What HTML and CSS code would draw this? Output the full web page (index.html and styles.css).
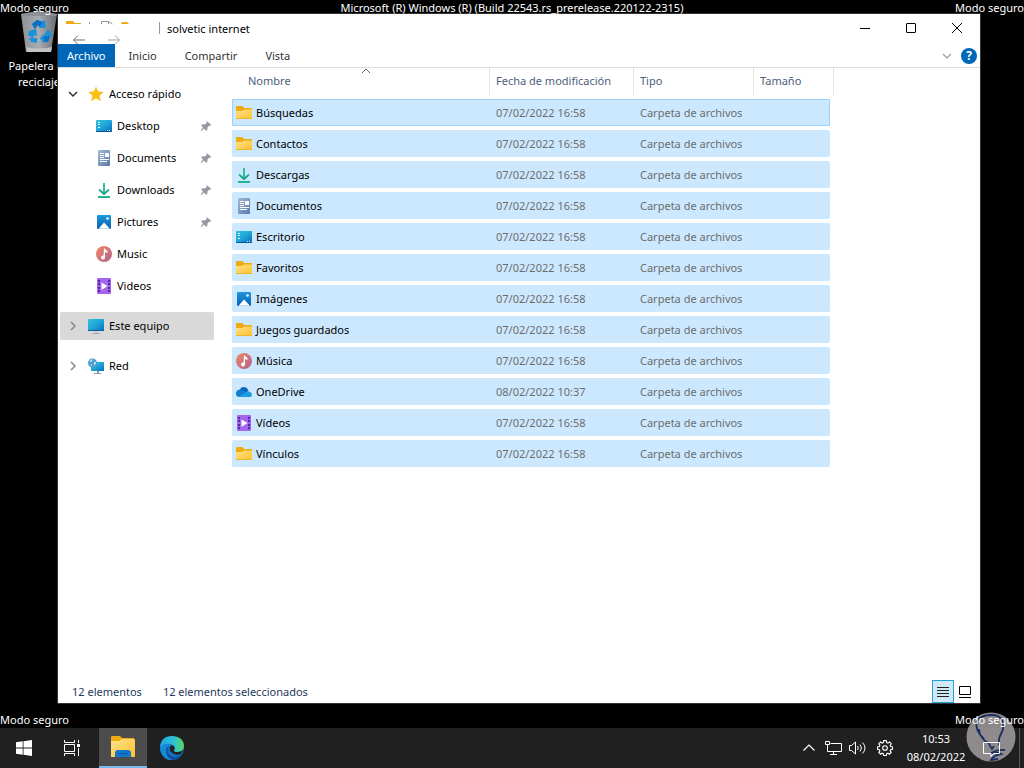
FILE: index.html
```html
<!DOCTYPE html>
<html lang="es">
<head>
<meta charset="utf-8">
<title>solvetic internet</title>
<link rel="stylesheet" href="styles.css">
</head>
<body>
<svg class="defs" width="0" height="0" aria-hidden="true">
  <defs>
    <linearGradient id="gFolder" x1="0" y1="0" x2="1" y2="1"><stop offset="0" stop-color="#ffe08a"/><stop offset="1" stop-color="#fdc32f"/></linearGradient>
    <linearGradient id="gBlue" x1="0" y1="0" x2="1" y2="1"><stop offset="0" stop-color="#2fc4dc"/><stop offset=".5" stop-color="#1fa5d8"/><stop offset="1" stop-color="#0a6cbd"/></linearGradient>
    <linearGradient id="gPic" x1="0" y1="0" x2="0" y2="1"><stop offset="0" stop-color="#1d98dc"/><stop offset="1" stop-color="#0960b4"/></linearGradient>
    <linearGradient id="gDoc" x1="0" y1="0" x2="1" y2="1"><stop offset="0" stop-color="#a3bbd4"/><stop offset="1" stop-color="#5878ac"/></linearGradient>
    <linearGradient id="gDown" x1="0" y1="0" x2="0" y2="1"><stop offset="0" stop-color="#35cf9c"/><stop offset="1" stop-color="#0f9a86"/></linearGradient>
    <linearGradient id="gMusic" x1="0" y1="0" x2="1" y2="1"><stop offset="0" stop-color="#ee8a62"/><stop offset="1" stop-color="#b4608f"/></linearGradient>
    <linearGradient id="gBin" x1="0" y1="0" x2="1" y2="0"><stop offset="0" stop-color="#8d9196"/><stop offset=".5" stop-color="#a9adb1"/><stop offset="1" stop-color="#686c70"/></linearGradient>
    <linearGradient id="gEdge" x1="0" y1="0" x2="1" y2="0"><stop offset="0" stop-color="#1fa4e6"/><stop offset=".6" stop-color="#2fc3d2"/><stop offset="1" stop-color="#5bd65c"/></linearGradient>
  </defs>
  <symbol id="folder" viewBox="0 0 16 16"><path d="M0 2q0-1 1-1h5q.6 0 1 .5L8 3h7q1 0 1 1v4H0z" fill="#eeaa10"/><path d="M0 6h6l2-1.500h7.500q.5 0 .5.500v9H0z" fill="url(#gFolder)"/><path d="M0 13h16v1H0z" fill="#f0b428"/></symbol>
  <symbol id="desktop" viewBox="0 0 16 16"><rect y="2" width="16" height="12" rx="1" fill="url(#gBlue)"/><path d="M0 13h16q0 1-1 1H1q-1 0-1-1z" fill="#07549b"/><path d="M2 4h2v1H2zM2 6h2v1H2zM2 9h2v1H2zM11 12h1v1h-1zM13 12h1v1h-1z" fill="#e9faff"/></symbol>
  <symbol id="document" viewBox="0 0 16 16"><path d="M3 0h10q1 0 1 1v14q0 1-1 1H3q-1 0-1-1V1q0-1 1-1z" fill="url(#gDoc)"/><path d="M4 3h4v1H4zM4 5h4v1H4zM9 3h4v4H9zM4 7h4v1H4zM4 9h9v1H4zM4 11h7v1H4z" fill="#fff"/></symbol>
  <symbol id="download" viewBox="0 0 16 16"><path d="M8 1v10.500M3 7.500l5 4.500 5-4.500" fill="none" stroke="url(#gDown)" stroke-width="1.700"/><path d="M7.200 1h1.600v10H7.200z" fill="#2fbd98"/><path d="M2 14h12v2H2z" fill="#27b38c"/></symbol>
  <symbol id="picture" viewBox="0 0 16 16"><rect x="1" y="1" width="14" height="14" rx="1" fill="url(#gPic)"/><path d="M2.500 14.800L8 8.500l6 6.300z" fill="#fff"/><circle cx="11.500" cy="4.500" r="1.300" fill="#fff"/></symbol>
  <symbol id="music" viewBox="0 0 16 16"><circle cx="8" cy="8" r="8" fill="url(#gMusic)"/><path d="M8 2.500h1q.5 1.500 2.500 2.500v2L9 6v5.500a2 2 0 1 1-1.500-2z" fill="#fff"/></symbol>
  <symbol id="video" viewBox="0 0 16 16"><rect x="1" width="14" height="16" rx="1" fill="#a564f0"/><path d="M2 2h2v2H2zM2 5h2v2H2zM2 9h2v2H2zM2 12h2v2H2zM12 2h2v2h-2zM12 5h2v2h-2zM12 9h2v2h-2zM12 12h2v2h-2z" fill="#56269e"/><path d="M5.500 4.500l6 3.500-6 4z" fill="#fff"/></symbol>
  <symbol id="onedrive" viewBox="0 0 16 16"><path d="M3.500 6q2-4.500 6.500-2.500 1.800 1 2.500 3.500l-5 3z" fill="#0867b8"/><path d="M3 13q-3-.5-3-3.500 0-3.500 4-4Q7 5 12 11z" fill="#127dd1"/><path d="M2.500 12.700L10 8q2-1.700 4 0 2 .5 2 2.500 0 2.500-2.500 2.500H5q-1.500 0-2.500-.3z" fill="#1e9be0"/></symbol>
  <symbol id="pc" viewBox="0 0 16 16"><rect y="1" width="16" height="12" rx=".6" fill="url(#gBlue)"/><path d="M4 15h8v1H4z" fill="#9aa8b0"/><path d="M7 13h2v2H7z" fill="#b6c1c8"/><path d="M0 12h16v1H0z" fill="#0a5e9d"/></symbol>
  <symbol id="network" viewBox="0 0 16 16"><rect x="3" y="4" width="13" height="9" rx=".6" fill="url(#gBlue)"/><path d="M6 15h7v1H6zM9 13h2v2H9z" fill="#8c9ba4"/><circle cx="4.500" cy="5" r="4.500" fill="#4f9fd0"/><path d="M1.500 3q2-2 3.500-1.500L4 3 2.500 4zM6 4l2 0-.5 2.500L6 7zM2 6l2 1v1.500z" fill="#cde6f2"/></symbol>
  <symbol id="pin" viewBox="0 0 16 16"><path d="M9 2.500l5 4-1 1.200-1.200-.2-2.300 2.200.1 2.800-1.300 1-2.600-2.600L2.500 14 2 13.500l2.500-3.800L2.600 7.200l1-1.100 3 .2L9 4.500l-.8-1z" fill="#92989f"/></symbol>
</svg>

<main class="desktop">
  <button class="recycle">
    <svg viewBox="0 0 42 42" class="recycle-icon">
      <path d="M3 3L21 0l18 3-6 38H8z" fill="url(#gBin)"/>
      <path d="M3 3L21 0l18 3-1 2H4z" fill="#8b8f95"/>
      <path d="M8 36q12 3 26 0l-1 5H9z" fill="#c2c2c2"/>
      <path d="M14 13l5-4 6 2 1 5-4 1-2-3-3 4z" fill="#086bc0"/>
      <path d="M25 10l2-1 1 8-7-1 2-2zM11 20l7-2 1 7-3-1-1 3-5-3zM11 27h8v5l-6-1zM30 18l4 6-3 3-5-3zM22 27l4-4v2h6l-2 6h-4v2z" fill="#1692dd"/>
      <path d="M14 13l5-4 6 2-5 2-3 5zM26 25h6l-2 6h-4z" fill="#0b73c8"/>
    </svg>
    <span>Papelera de<br>reciclaje</span>
  </button>
  <span class="safe top left">Modo seguro</span>
  <span class="safe top center">Microsoft (R) Windows (R) (Build 22543.rs_prerelease.220122-2315)</span>
  <span class="safe top right">Modo seguro</span>
  <span class="safe bottom left">Modo seguro</span>
  <span class="safe bottom right">Modo seguro</span>

  <section class="window">
    <header class="titlebar">
      <svg class="quick" width="102" height="30" viewBox="0 0 102 30" fill="none">
        <path d="M8 10V8q0-1 1-1h6l2 2h6v1z" fill="#eeaa10"/>
        <path d="M31.500 8v2M101.500 8v12" stroke="#999"/>
        <path d="M43.500 10V7.500h7l4 2.500M50.500 7.500V10" stroke="#92989d"/>
        <path d="M63 10q0-2 2-2h4l2 2z" fill="#eeaa10"/>
        <path d="M15.500 26h11.500M20 21.500L15.500 26l4.500 4.500" stroke="#6e6e6e"/>
        <path d="M50 26h11.500M57 21.500l4.500 4.500-4.500 4.500" stroke="#a3a3a3"/>
      </svg>
      <h1 class="title">solvetic internet</h1>
      <div class="controls">
        <button aria-label="Minimizar"><svg width="12" height="12"><path d="M1 6.500h10" stroke="#000"/></svg></button>
        <button aria-label="Maximizar"><svg width="12" height="12"><rect x="1.500" y="1.500" width="9" height="9" rx=".5" fill="none" stroke="#000"/></svg></button>
        <button aria-label="Cerrar"><svg width="12" height="12"><path d="M1 1l10 10M11 1L1 11" stroke="#000"/></svg></button>
      </div>
    </header>
    <nav class="tabs">
      <button class="tab active">Archivo</button>
      <button class="tab">Inicio</button>
      <button class="tab">Compartir</button>
      <button class="tab">Vista</button>
      <div class="tab-tools">
        <button aria-label="Expandir la cinta"><svg width="10" height="8"><path d="M1 2l4 4 4-4" fill="none" stroke="#999" stroke-width="1.200"/></svg></button>
        <button class="help" aria-label="Ayuda">?</button>
      </div>
    </nav>
    <div class="content">
      <nav class="sidebar">
        <a class="node" href="#"><svg class="chev" viewBox="0 0 10 10"><path d="M1 3l4 4 4-4" fill="none" stroke="#333" stroke-width="1.500"/></svg><svg class="icon" viewBox="0 0 16 16"><path d="M8 .5l2.200 5.100 5.500.5-4.200 3.600 1.300 5.500L8 12.300l-4.800 2.900 1.300-5.500L.3 6.100l5.500-.5z" fill="#fbbe16"/></svg>Acceso rápido</a>
        <a class="node sub" href="#"><svg class="icon"><use href="#desktop"/></svg>Desktop<svg class="pin"><use href="#pin"/></svg></a>
        <a class="node sub" href="#"><svg class="icon"><use href="#document"/></svg>Documents<svg class="pin"><use href="#pin"/></svg></a>
        <a class="node sub" href="#"><svg class="icon"><use href="#download"/></svg>Downloads<svg class="pin"><use href="#pin"/></svg></a>
        <a class="node sub" href="#"><svg class="icon"><use href="#picture"/></svg>Pictures<svg class="pin"><use href="#pin"/></svg></a>
        <a class="node sub" href="#"><svg class="icon"><use href="#music"/></svg>Music</a>
        <a class="node sub" href="#"><svg class="icon"><use href="#video"/></svg>Videos</a>
        <a class="node root current" href="#"><svg class="chev" viewBox="0 0 10 10"><path d="M3 1l4 4-4 4" fill="none" stroke="#888" stroke-width="1.500"/></svg><svg class="icon"><use href="#pc"/></svg>Este equipo</a>
        <a class="node root" href="#"><svg class="chev" viewBox="0 0 10 10"><path d="M3 1l4 4-4 4" fill="none" stroke="#888" stroke-width="1.500"/></svg><svg class="icon"><use href="#network"/></svg>Red</a>
      </nav>
      <div class="files">
        <table>
          <colgroup><col class="c-name"><col class="c-date"><col class="c-type"><col class="c-size"></colgroup>
          <thead><tr><th>Nombre<svg class="sort" width="10" height="6"><path d="M1 5l4-4 4 4" fill="none" stroke="#666"/></svg></th><th>Fecha de modificación</th><th>Tipo</th><th>Tamaño</th></tr></thead>
          <tbody>
            <tr class="focused"><td><svg class="icon"><use href="#folder"/></svg>Búsquedas</td><td>07/02/2022 16:58</td><td>Carpeta de archivos</td><td></td></tr>
            <tr><td><svg class="icon"><use href="#folder"/></svg>Contactos</td><td>07/02/2022 16:58</td><td>Carpeta de archivos</td><td></td></tr>
            <tr><td><svg class="icon"><use href="#download"/></svg>Descargas</td><td>07/02/2022 16:58</td><td>Carpeta de archivos</td><td></td></tr>
            <tr><td><svg class="icon"><use href="#document"/></svg>Documentos</td><td>07/02/2022 16:58</td><td>Carpeta de archivos</td><td></td></tr>
            <tr><td><svg class="icon"><use href="#desktop"/></svg>Escritorio</td><td>07/02/2022 16:58</td><td>Carpeta de archivos</td><td></td></tr>
            <tr><td><svg class="icon"><use href="#folder"/></svg>Favoritos</td><td>07/02/2022 16:58</td><td>Carpeta de archivos</td><td></td></tr>
            <tr><td><svg class="icon"><use href="#picture"/></svg>Imágenes</td><td>07/02/2022 16:58</td><td>Carpeta de archivos</td><td></td></tr>
            <tr><td><svg class="icon"><use href="#folder"/></svg>Juegos guardados</td><td>07/02/2022 16:58</td><td>Carpeta de archivos</td><td></td></tr>
            <tr><td><svg class="icon"><use href="#music"/></svg>Música</td><td>07/02/2022 16:58</td><td>Carpeta de archivos</td><td></td></tr>
            <tr><td><svg class="icon"><use href="#onedrive"/></svg>OneDrive</td><td>08/02/2022 10:37</td><td>Carpeta de archivos</td><td></td></tr>
            <tr><td><svg class="icon"><use href="#video"/></svg>Vídeos</td><td>07/02/2022 16:58</td><td>Carpeta de archivos</td><td></td></tr>
            <tr><td><svg class="icon"><use href="#folder"/></svg>Vínculos</td><td>07/02/2022 16:58</td><td>Carpeta de archivos</td><td></td></tr>
          </tbody>
        </table>
      </div>
    </div>
    <footer class="status">
      <span>12 elementos</span>
      <span>12 elementos seleccionados</span>
      <div class="views">
        <button class="view on" aria-label="Detalles"><svg width="12" height="12"><path d="M0 1.500h12M0 4.500h12M0 7.500h12M0 10.500h12" stroke="#222"/></svg></button>
        <button class="view" aria-label="Iconos grandes"><svg width="12" height="12"><path d="M.5.500h11v8H.5zM0 11.500h12" fill="none" stroke="#000"/></svg></button>
      </div>
    </footer>
  </section>
</main>

<footer class="taskbar">
  <button class="task" aria-label="Inicio"><svg width="16" height="16" fill="#fff"><path d="M0 2.300L6.700 1.300v6.200H0zM7.500 1.200L16 0v7.500H7.500zM0 8.500h6.700v6.200L0 13.700zM7.500 8.500H16V16l-8.500-1.200z"/></svg></button>
  <button class="task" aria-label="Vista de tareas"><svg width="16" height="16" fill="none" stroke="#fff"><path d="M.5 0v2.500h10V0M.5 16v-2.500h10V16M.5 4.500h10v7H.5zM14.500 0v3M14.500 8v8"/><path d="M13 4h3v3h-3z" fill="#fff" stroke="none"/></svg></button>
  <button class="task running" aria-label="Explorador de archivos"><svg width="24" height="24" viewBox="0 0 24 24"><path d="M0 2q0-1 1-1h8l2 2h12v5H0z" fill="#eeaa10"/><path d="M0 6h8l3-2h12q1 0 1 1v17H0z" fill="url(#gFolder)"/><path d="M4 22v-4q0-3 3-3h10q3 0 3 3v4z" fill="#1375cb"/><path d="M7 18h10v1H7z" fill="#0b5aa5"/></svg></button>
  <button class="task" aria-label="Microsoft Edge"><svg width="24" height="24" viewBox="0 0 24 24"><circle cx="12" cy="12" r="12" fill="#1172c4"/><path d="M0 11Q1 0 12.500 0 24 1 24 10q-.5 6-6.500 6-4 0-3.500-2 2-2 0-4Q8 5 0 11z" fill="url(#gEdge)"/><path d="M0 11Q6 6 12 9q-5 0-5 6 1 7 8 8.500Q4 26 .5 15z" fill="#168bd8"/><path d="M9 10q-4 6 2 10 5 3 11.500-2Q19 24 13 24 6 22 6 15q0-4 3-5z" fill="#0e4d96"/><path d="M12 9q-4 3-1 7 4 4 10 2l3-5q-2 3-7 3-4 0-3-2 2-3-2-5z" fill="#222"/></svg></button>
  <div class="tray">
    <button aria-label="Iconos ocultos"><svg width="12" height="8"><path d="M.5 6.500L6 1l5.500 5.500" fill="none" stroke="#fff" stroke-width="1.200"/></svg></button>
    <button aria-label="Red"><svg width="17" height="14" fill="none" stroke="#fff"><path d="M5.500 2.500h11v8H2.500V5M5 13.500h7M8.500 10.500v3M.5.500h4v3h-4zM2.500 4v2"/></svg></button>
    <button aria-label="Volumen"><svg width="17" height="14" fill="none" stroke="#fff"><path d="M.5 4.500h2L6.500 1v12L2.500 9.500h-2zM8.500 5q1.500 2 0 4M11 3.500q3 3.500 0 7M13.500 1.500q5 5.500 0 11"/></svg></button>
    <button aria-label="Configuración"><svg width="16" height="16" viewBox="0 0 16 16" fill="none" stroke="#fff" stroke-width="1.100"><path d="M6.700.6h2.600l.4 2 1.200.5L12.600 2l1.700 1.700-1.100 1.700.5 1.200 1.800.3v2.400l-1.900.4-.5 1.200 1.100 1.600-1.700 1.700-1.600-1-1.200.5-.4 1.800H6.700l-.4-1.800-1.200-.5-1.600 1-1.700-1.700 1.100-1.600-.5-1.200-1.900-.4V6.900l1.900-.3.500-1.200-1.100-1.700L3.500 2l1.600 1.100 1.200-.5z"/><circle cx="8" cy="8" r="2.300"/></svg></button>
    <time class="clock" datetime="2022-02-08T10:53">10:53<br>08/02/2022</time>
    <button class="notify" aria-label="Notificaciones"><svg width="17" height="16" fill="none" stroke="#fff"><path d="M.5 1.500h16v11h-6l-2.500 3v-3H.5z"/></svg></button>
  </div>
</footer>
<svg class="watermark" width="50" height="50" viewBox="0 0 50 50">
  <circle cx="25" cy="25" r="24.500" fill="#9b9799" fill-opacity=".9"/>
  <path d="M18 27Q8 17 11 9q4-6 14-6 9 0 11 5 3 7-1 14-3 5-2 11M13 17q0 6 6 12 4 1 5 5l2 3 2-3M39 38q-7-1-14 3 6-1 10 1-7 1-10 6l7-1" fill="none" stroke="#1b2f63" stroke-width="1.800"/>
</svg>
</body>
</html>
```

FILE: styles.css
```css
* { box-sizing: border-box; }

body {
  margin: 0;
  height: 100vh;
  display: grid;
  grid-template-rows: 1fr 40px;
  background: #000;
  color: #000;
  font: 11px/16px "Segoe UI", "Noto Sans", "Open Sans", sans-serif;
  overflow: hidden;
}

button {
  border: 0;
  padding: 0;
  background: none;
  color: inherit;
  font: inherit;
}

svg { display: block; flex: none; }
.defs { position: absolute; }
.icon { width: 16px; height: 16px; }

.desktop { position: relative; }

.safe {
  position: absolute;
  z-index: 1;
  color: #fff;
  white-space: nowrap;
}
.top { top: 0; }
.bottom { bottom: 0; }
.left { left: 0; }
.right { right: 0; }
.center { left: 0; right: 0; text-align: center; }

.recycle {
  position: absolute;
  top: 11px;
  left: 0;
  width: 78px;
  display: flex;
  flex-direction: column;
  align-items: center;
  gap: 5px;
  color: #fff;
}
.recycle-icon { width: 42px; height: 42px; }

.window {
  position: absolute;
  inset: 14px 44px 25px 58px;
  display: flex;
  flex-direction: column;
  background: #fff;
  outline: 1px solid #333;
}

.titlebar { display: flex; height: 30px; }
.title {
  margin: 0;
  padding: 7px 7px 0;
  flex: 1;
  font-size: 11px;
  font-weight: 400;
}
.controls { display: flex; height: 28px; }
.controls button {
  width: 46px;
  display: grid;
  place-items: center;
}

.tabs {
  display: flex;
  height: 24px;
  border-bottom: 1px solid #dadbdc;
}
.tab { padding: 0 14px; color: #333; }
.tab.active { padding: 0 9px; background: #0067b8; color: #fff; }
.tab-tools {
  margin-left: auto;
  padding-right: 3px;
  display: flex;
  align-items: center;
  gap: 9px;
}
.help {
  width: 16px;
  height: 16px;
  border-radius: 50%;
  background: #0067b8;
  color: #fff;
  font-size: 12px;
  font-weight: 700;
}

.content { flex: 1; display: flex; min-height: 0; }

.sidebar {
  width: 174px;
  padding: 12px 18px 0 2px;
  display: flex;
  flex-direction: column;
  gap: 4px;
}
.node {
  height: 28px;
  padding: 0 0 0 8px;
  display: flex;
  align-items: center;
  gap: 5px;
  border-radius: 2px;
  color: #000;
  text-decoration: none;
}
.node .chev { width: 10px; height: 10px; margin-right: 5px; }
.node.sub { padding-left: 36px; }
.node.root { margin-top: 8px; }
.node.current { background: #d9d9d9; }
.pin { width: 14px; height: 14px; margin: 0 1px 0 auto; }

.files { flex: 1; }
table {
  width: 598px;
  margin-top: -4px;
  table-layout: fixed;
  border-spacing: 0 4px;
}
.c-name { width: 258px; }
.c-date { width: 144px; }
.c-type { width: 120px; }
th {
  position: relative;
  height: 27px;
  padding: 0 6px 2px;
  border-right: 1px solid #e5e5e5;
  color: #4c607a;
  font-weight: 400;
  text-align: left;
}
th:first-child { padding-left: 16px; }
th:last-child { border-right: 0; }
th:last-child::after {
  content: "";
  position: absolute;
  inset: 0 -4px 0 auto;
  width: 1px;
  background: #e5e5e5;
}
.sort { position: absolute; top: 0; left: 50%; }
td {
  height: 27px;
  padding: 0 6px;
  background: #cce8ff;
  color: #6d6d6d;
  white-space: nowrap;
}
td:first-child {
  padding-left: 4px;
  border-radius: 2px 0 0 2px;
  color: #000;
}
td:last-child { border-radius: 0 2px 2px 0; }
td .icon {
  display: inline-block;
  margin-right: 4px;
  vertical-align: -4px;
}
.focused td { box-shadow: inset 0 1px #99d1ff, inset 0 -1px #99d1ff; }
.focused td:first-child { box-shadow: inset 1px 0 #99d1ff, inset 0 1px #99d1ff, inset 0 -1px #99d1ff; }
.focused td:last-child { box-shadow: inset -1px 0 #99d1ff, inset 0 1px #99d1ff, inset 0 -1px #99d1ff; }

.status {
  display: flex;
  align-items: center;
  gap: 21px;
  height: 23px;
  padding: 0 4px 0 14px;
  color: #1e395b;
}
.views { display: flex; height: 23px; margin-left: auto; }
.view {
  width: 22px;
  display: grid;
  place-items: center;
}
.view.on { border: 1px solid #26a0da; background: #cfe8f6; }

.taskbar { display: flex; background: #202020; color: #fff; }
.task {
  width: 48px;
  display: grid;
  place-items: center;
}
.task.running {
  margin: 0 1px 0 3px;
  background: #4c4c4c;
  border-bottom: 2px solid #76b9ed;
}
.tray {
  margin-left: auto;
  padding-right: 4px;
  display: flex;
  align-items: center;
}
.tray button {
  width: 24px;
  height: 40px;
  display: grid;
  place-items: center;
}
.tray button:nth-child(4) { width: 32px; }
.clock {
  width: 70px;
  line-height: 18px;
  text-align: center;
}
.tray .notify {
  position: relative;
  z-index: 1;
  width: 49px;
  padding: 2px 8px 0 0;
  border-right: 1px solid #555;
}

.watermark { position: absolute; right: 8px; bottom: 6px; }
```
